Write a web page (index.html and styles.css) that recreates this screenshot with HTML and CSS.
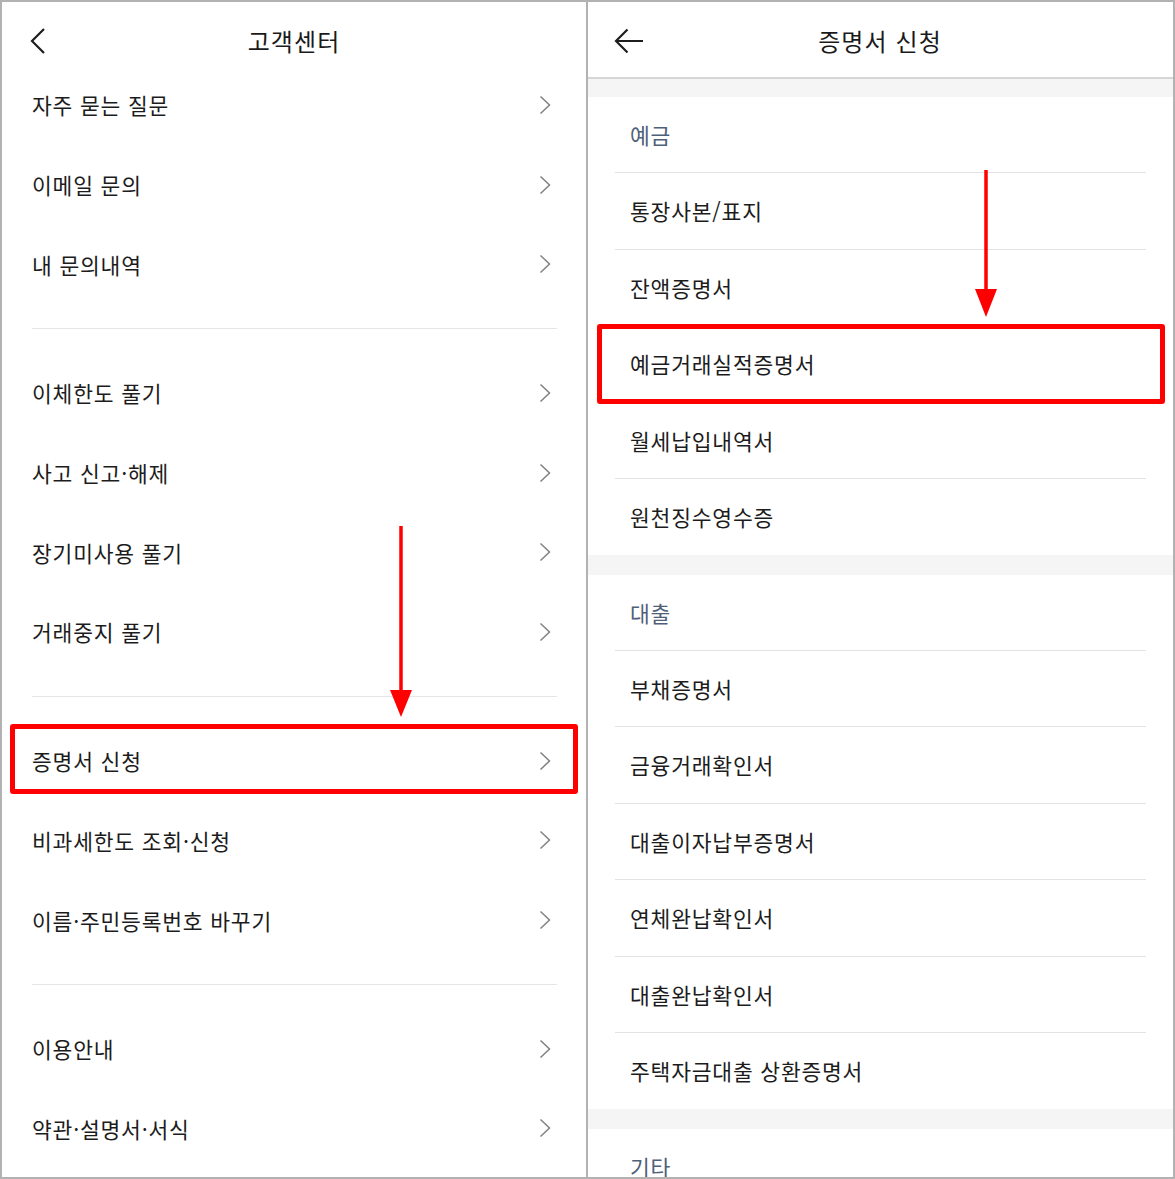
FILE: index.html
```html
<!DOCTYPE html>
<html lang="ko">
<head>
    <meta charset="UTF-8">
    <meta name="viewport" content="width=device-width, initial-scale=1.0">
    <title>고객센터 - 증명서 신청</title>
    <link rel="stylesheet" href="styles.css">
</head>
<body>
    <div class="frame">
        <!-- 왼쪽: 고객센터 -->
        <section class="panel left">
            <header class="topbar">
                <span class="back">
                    <svg width="18" height="28" viewBox="0 0 18 28"><path d="M15 2 L3 14 L15 26" fill="none" stroke="#1e1e1e" stroke-width="2.2"/></svg>
                </span>
                <h1>고객센터</h1>
                <span></span>
            </header>

            <ul class="menu">
                <li>자주 묻는 질문<svg class="chev" viewBox="0 0 12 20"><path d="M1.5 1.5 L10.5 10 L1.5 18.5"/></svg></li>
                <li>이메일 문의<svg class="chev" viewBox="0 0 12 20"><path d="M1.5 1.5 L10.5 10 L1.5 18.5"/></svg></li>
                <li>내 문의내역<svg class="chev" viewBox="0 0 12 20"><path d="M1.5 1.5 L10.5 10 L1.5 18.5"/></svg></li>
            </ul>
            <hr class="sep">
            <ul class="menu">
                <li>이체한도 풀기<svg class="chev" viewBox="0 0 12 20"><path d="M1.5 1.5 L10.5 10 L1.5 18.5"/></svg></li>
                <li>사고 신고·해제<svg class="chev" viewBox="0 0 12 20"><path d="M1.5 1.5 L10.5 10 L1.5 18.5"/></svg></li>
                <li>장기미사용 풀기<svg class="chev" viewBox="0 0 12 20"><path d="M1.5 1.5 L10.5 10 L1.5 18.5"/></svg></li>
                <li>거래중지 풀기<svg class="chev" viewBox="0 0 12 20"><path d="M1.5 1.5 L10.5 10 L1.5 18.5"/></svg></li>
            </ul>
            <hr class="sep">
            <ul class="menu">
                <li>증명서 신청<svg class="chev" viewBox="0 0 12 20"><path d="M1.5 1.5 L10.5 10 L1.5 18.5"/></svg></li>
                <li>비과세한도 조회·신청<svg class="chev" viewBox="0 0 12 20"><path d="M1.5 1.5 L10.5 10 L1.5 18.5"/></svg></li>
                <li>이름·주민등록번호 바꾸기<svg class="chev" viewBox="0 0 12 20"><path d="M1.5 1.5 L10.5 10 L1.5 18.5"/></svg></li>
            </ul>
            <hr class="sep">
            <ul class="menu">
                <li>이용안내<svg class="chev" viewBox="0 0 12 20"><path d="M1.5 1.5 L10.5 10 L1.5 18.5"/></svg></li>
                <li>약관·설명서·서식<svg class="chev" viewBox="0 0 12 20"><path d="M1.5 1.5 L10.5 10 L1.5 18.5"/></svg></li>
            </ul>
        </section>

        <!-- 오른쪽: 증명서 신청 -->
        <section class="panel right">
            <header class="topbar bordered">
                <span class="back">
                    <svg width="30" height="26" viewBox="0 0 30 26"><path d="M2 13 H29 M13.5 1.5 L2 13 L13.5 24.5" fill="none" stroke="#1e1e1e" stroke-width="2.2"/></svg>
                </span>
                <h1>증명서 신청</h1>
                <span></span>
            </header>

            <div class="band"></div>
            <div class="group">
                <h2>예금</h2>
                <ul class="docs">
                    <li>통장사본/표지</li>
                    <li>잔액증명서</li>
                    <li>예금거래실적증명서</li>
                    <li>월세납입내역서</li>
                    <li>원천징수영수증</li>
                </ul>
            </div>
            <div class="band"></div>
            <div class="group">
                <h2>대출</h2>
                <ul class="docs">
                    <li>부채증명서</li>
                    <li>금융거래확인서</li>
                    <li>대출이자납부증명서</li>
                    <li>연체완납확인서</li>
                    <li>대출완납확인서</li>
                    <li>주택자금대출 상환증명서</li>
                </ul>
            </div>
            <div class="band"></div>
            <div class="group">
                <h2>기타</h2>
            </div>
        </section>

        <!-- 강조 표시 -->
        <div class="mark mark-left"></div>
        <div class="mark mark-right"></div>
        <svg class="arrow arrow-left" width="26" height="196" viewBox="0 0 26 196">
            <line x1="13" y1="2" x2="13" y2="170" stroke="#ff0000" stroke-width="3.5"/>
            <polygon points="2,166 24,166 13,193" fill="#ff0000"/>
        </svg>
        <svg class="arrow arrow-right" width="26" height="151" viewBox="0 0 26 151">
            <line x1="13" y1="2" x2="13" y2="125" stroke="#ff0000" stroke-width="3.5"/>
            <polygon points="2,121 24,121 13,149" fill="#ff0000"/>
        </svg>
    </div>
</body>
</html>
```

FILE: styles.css
```css
* {
    box-sizing: border-box;
}
body {
    margin: 0;
    padding: 0;
    background-color: #fff;
    color: #1c1c1c;
    font-family: "Noto Sans CJK KR", "Noto Sans", sans-serif;
}
ul {
    list-style: none;
    margin: 0;
    padding: 0;
}
.frame {
    position: relative;
    width: 1175px;
    height: 1179px;
    border: 2px solid #b2b2b2;
    display: grid;
    grid-template-columns: 584px 2px 1fr;
    overflow: hidden;
}
.frame::before {
    content: "";
    grid-column: 2;
    grid-row: 1;
    background-color: #b2b2b2;
}
.panel {
    overflow: hidden;
    grid-row: 1;
}
.left {
    grid-column: 1;
}
.right {
    grid-column: 3;
}

/* 상단 바 */
.topbar {
    display: grid;
    grid-template-columns: 1fr auto 1fr;
    align-items: start;
    height: 63px;
    padding: 24px 27px 0;
}
.topbar h1 {
    margin: 0;
    font-size: 24px;
    font-weight: 400;
    line-height: 30px;
    letter-spacing: 1.1px;
    color: #1a1a1a;
}
.back {
    display: flex;
    height: 30px;
    align-items: center;
}
.bordered {
    height: 77px;
    border-bottom: 2px solid #d6d6d6;
    padding-left: 26px;
}

/* 왼쪽 메뉴 */
.menu li {
    display: flex;
    align-items: center;
    justify-content: space-between;
    height: 79.7px;
    padding: 0 35px 0 30px;
    font-size: 21.5px;
    letter-spacing: 0.8px;
}
.chev {
    width: 12px;
    height: 20px;
    fill: none;
    stroke: #808080;
    stroke-width: 1.5;
}
.sep {
    border: none;
    border-top: 1px solid #e6e6e6;
    margin: 24px 29px 24px 30px;
}

/* 오른쪽 목록 */
.band {
    height: 18px;
    background-color: #f5f5f5;
}
.group {
    padding: 0 27px;
}
.group + .band {
    height: 20px;
}
.group h2 {
    margin: 0;
    height: 75px;
    display: flex;
    align-items: center;
    padding-left: 15px;
    font-size: 21.5px;
    font-weight: 400;
    letter-spacing: 0.8px;
    color: #4f6079;
}
.docs li {
    height: 76.5px;
    display: flex;
    align-items: center;
    padding-left: 15px;
    border-top: 1px solid #e3e3e3;
    font-size: 21.5px;
    letter-spacing: 0.8px;
}

/* 강조 표시 */
.mark {
    position: absolute;
    border: 5px solid #ff0000;
    border-radius: 3px;
    width: 568px;
}
.mark-left {
    left: 8px;
    top: 722px;
    height: 70px;
}
.mark-right {
    left: 595px;
    top: 322px;
    height: 80px;
}
.arrow {
    position: absolute;
}
.arrow-left {
    left: 386px;
    top: 522px;
}
.arrow-right {
    left: 971px;
    top: 166px;
}
```
